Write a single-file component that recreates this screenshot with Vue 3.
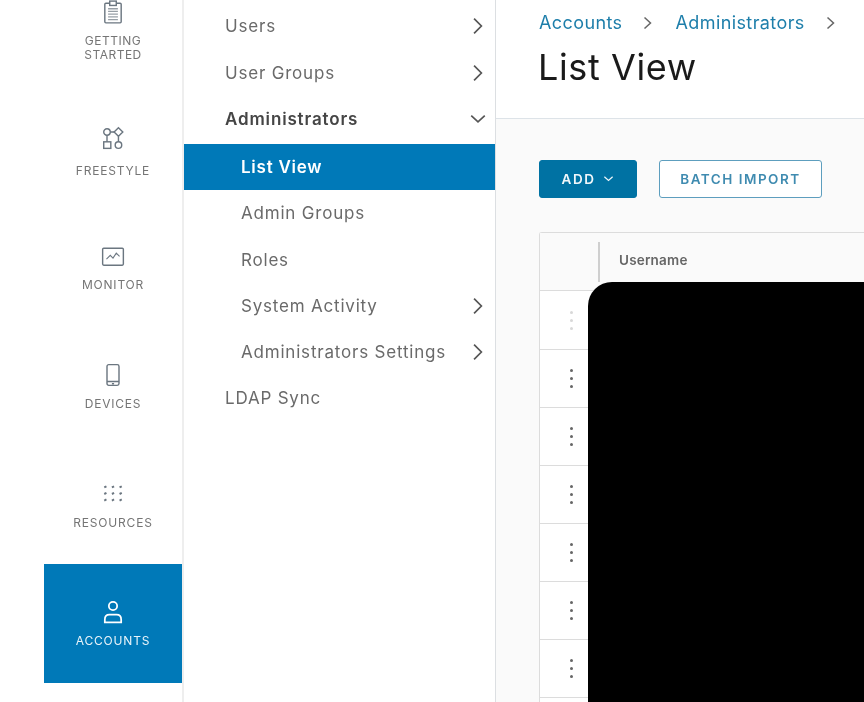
<script setup>
const rail = [
  { id: 'start', lines: ['GETTING', 'STARTED'] },
  { id: 'freestyle', lines: ['FREESTYLE'] },
  { id: 'monitor', lines: ['MONITOR'] },
  { id: 'devices', lines: ['DEVICES'] },
  { id: 'resources', lines: ['RESOURCES'] },
  { id: 'accounts', lines: ['ACCOUNTS'], active: true }
]
const topNav = [
  { label: 'Users', arrow: 'right' },
  { label: 'User Groups', arrow: 'right' },
  { label: 'Administrators', arrow: 'down', bold: true }
]
const subNav = [
  { label: 'List View', active: true },
  { label: 'Admin Groups' },
  { label: 'Roles' },
  { label: 'System Activity', arrow: 'right' },
  { label: 'Administrators Settings', arrow: 'right' }
]
const rows = [1, 2, 3, 4, 5, 6, 7, 8]
const dots = []
for (const y of [4, 10, 16]) for (const x of [3, 10, 17]) dots.push({ x, y })
</script>

<template>
  <div class="page">
    <aside class="rail">
      <div
        v-for="item in rail"
        :key="item.id"
        class="rail-item"
        :class="[item.id, { active: item.active }]"
      >
        <svg class="rail-icon" viewBox="0 0 22 22" fill="none" stroke="currentColor" stroke-width="1.300">
          <template v-if="item.id === 'start'">
            <rect x="3.500" y="3" width="15" height="18" rx="1" />
            <rect x="8" y="1" width="6" height="4" fill="#fff" />
            <path d="M6.500 8h9M6.500 10.500h9M6.500 13h9M6.500 15.500h9M6.500 18h9" stroke-width="1.200" opacity=".7" />
          </template>
          <template v-else-if="item.id === 'freestyle'">
            <circle cx="5.500" cy="5.500" r="3" />
            <path d="M16 1.500l4 4-4 4-4-4z" />
            <rect x="2.500" y="14.500" width="6.500" height="6" />
            <circle cx="16" cy="17.500" r="3" />
            <path d="M5.500 8.500v6M16 9.500v5M8.500 5.500H12" />
          </template>
          <template v-else-if="item.id === 'monitor'">
            <rect x="1.500" y="3" width="19" height="15.500" rx="1" />
            <path d="M5 13l3.500-3.500 2.500 2.500 3-4.500 3 3" stroke-width="1" />
          </template>
          <template v-else-if="item.id === 'devices'">
            <rect x="5.500" y="1.500" width="11" height="19" rx="1.600" />
            <path d="M5.500 17h11M10 19h2" />
          </template>
          <template v-else-if="item.id === 'resources'">
            <path
              v-for="d in dots"
              :key="d.x + '-' + d.y"
              :d="`M${d.x} ${d.y + 1}l2-1`"
              stroke-width="1.800"
            />
          </template>
          <template v-else>
            <circle cx="11" cy="5.500" r="3.800" stroke-width="1.600" />
            <path d="M3.500 20.500v-2.500c0-3 2-4.500 4.200-4.500h6.600c2.200 0 4.200 1.500 4.200 4.500v2.500z" stroke-width="1.600" />
          </template>
        </svg>
        <div class="rail-label">
          <div v-for="line in item.lines" :key="line">{{ line }}</div>
        </div>
      </div>
    </aside>

    <nav class="subnav">
      <div v-for="n in topNav" :key="n.label" class="nav-row top" :class="{ bold: n.bold }">
        <span>{{ n.label }}</span>
        <svg class="chev" viewBox="0 0 16 16" fill="none" stroke="currentColor" stroke-width="1.500">
          <path :d="n.arrow === 'down' ? 'M2 5l6 5.500 6-5.500' : 'M4.500 1.500l6.500 6.500-6.500 6.500'" />
        </svg>
      </div>
      <div class="children">
        <div
          v-for="n in subNav"
          :key="n.label"
          class="nav-row child"
          :class="{ selected: n.active }"
        >
          <span>{{ n.label }}</span>
          <svg v-if="n.arrow" class="chev" viewBox="0 0 16 16" fill="none" stroke="currentColor" stroke-width="1.500">
            <path d="M4.500 1.500l6.500 6.500-6.500 6.500" />
          </svg>
        </div>
      </div>
      <div class="nav-row"><span>LDAP Sync</span></div>
    </nav>

    <main class="main">
      <header class="head">
        <div class="crumbs">
          <a>Accounts</a>
          <svg class="crumb-sep" viewBox="0 0 12 14" fill="none" stroke="currentColor" stroke-width="1.500"><path d="M2.500 1.500l6 5.500-6 5.500" /></svg>
          <a>Administrators</a>
          <svg class="crumb-sep" viewBox="0 0 12 14" fill="none" stroke="currentColor" stroke-width="1.500"><path d="M2.500 1.500l6 5.500-6 5.500" /></svg>
        </div>
        <h1>List View</h1>
      </header>
      <section class="body">
        <div class="actions">
          <button class="btn primary">
            ADD
            <svg class="btn-chev" viewBox="0 0 12 8" fill="none" stroke="currentColor" stroke-width="1.300"><path d="M1.500 1.500l4.500 4 4.500-4" /></svg>
          </button>
          <button class="btn outline">BATCH IMPORT</button>
        </div>
        <div class="table">
          <div class="thead">
            <div class="cell-menu"></div>
            <div class="th">Username</div>
          </div>
          <div v-for="r in rows" :key="r" class="tr">
            <div class="cell-menu" :class="{ faint: r === 1 }">
              <i></i><i></i><i></i>
            </div>
          </div>
        </div>
      </section>
      <div class="redaction"></div>
    </main>
  </div>
</template>

<style>
html, body { margin: 0; background: #fff; overflow: hidden; }
</style>

<style scoped>
.page {
  width: 864px;
  height: 702px;
  overflow: hidden;
  display: flex;
  padding-left: 44px;
  box-sizing: border-box;
  background: #fff;
  font-family: Inter, "Noto Sans", sans-serif;
  filter: blur(0.45px);
}
.rail {
  width: 138px;
  flex: none;
  display: flex;
  flex-direction: column;
  color: #6b7680;
}
.rail-item {
  height: 118.500px;
  flex: none;
  display: flex;
  flex-direction: column;
  align-items: center;
  padding-top: 36px;
  box-sizing: border-box;
}
.rail-item.start {
  height: 126px;
  margin-top: -36px;
}
.rail-item.active {
  background: #0079b8;
  color: #fff;
}
.rail-icon { width: 24px; height: 24px; flex: none; }
.rail-label {
  margin-top: 10px;
  font-size: 12px;
  line-height: 14px;
  letter-spacing: 0.8px;
  text-align: center;
  color: #757575;
  white-space: nowrap;
}
.monitor .rail-label { margin-top: 9px; }
.freestyle .rail-label { margin-top: 14px; }
.start .rail-label { letter-spacing: 0.5px; }
.active .rail-label { color: #e8f4fa; }
.subnav {
  width: 314px;
  flex: none;
  box-sizing: border-box;
  border-left: 2px solid #eeeeee;
  border-right: 1px solid #dcdfe2;
  padding-top: 3px;
}
.nav-row {
  height: 46.250px;
  display: flex;
  align-items: center;
  justify-content: space-between;
  padding: 0 8px 0 41px;
  font-size: 17px;
  letter-spacing: 0.8px;
  color: #6a6a6a;
}
.nav-row.top { height: 46.500px; }
.nav-row.bold { font-weight: 600; color: #454545; letter-spacing: 0.85px; }
.children { margin-top: 1.500px; }
.child { padding-left: 57px; }
.child.selected {
  background: #0079b8;
  color: #fff;
  font-weight: 600;
  letter-spacing: 0.75px;
}
.chev { width: 18px; height: 18px; color: #555; flex: none; }
.main {
  position: relative;
  flex: 1;
  min-width: 0;
  display: flex;
  flex-direction: column;
}
.head {
  height: 119px;
  flex: none;
  box-sizing: border-box;
  padding: 9px 0 0 43px;
  border-bottom: 1px solid #dde3e8;
}
.crumbs {
  display: flex;
  align-items: center;
  height: 26px;
  font-size: 18px;
  letter-spacing: 0.4px;
  color: #1d7eaa;
  white-space: nowrap;
}
.crumb-sep { width: 12px; height: 14px; margin: 2px 21px 0 20px; color: #666; flex: none; }
h1 {
  margin: 6px 0 0 -1px;
  font-size: 36px;
  line-height: 52px;
  font-weight: 400;
  letter-spacing: 0.6px;
  color: #1a1a1a;
}
.body {
  flex: 1;
  background: #fafafa;
  padding: 41px 0 0 43px;
  min-width: 0;
}
.actions { display: flex; gap: 22px; }
.btn {
  height: 38px;
  box-sizing: border-box;
  border-radius: 3px;
  font-family: inherit;
  font-size: 13.500px;
  font-weight: 600;
  letter-spacing: 1.500px;
  display: flex;
  align-items: center;
  justify-content: center;
}
.primary {
  width: 98px;
  background: #0072a3;
  border: 1px solid #0072a3;
  color: #f0f7fa;
  gap: 8px;
}
.btn-chev { width: 11px; height: 8px; }
.outline {
  width: 163px;
  background: #fff;
  border: 1.500px solid #5d9ebe;
  color: #3f8bb0;
}
.table {
  margin-top: 34px;
  width: 340px;
  background: #fff;
  border: 1px solid #dcdcdc;
  border-right: none;
  border-radius: 3px 0 0 0;
}
.thead {
  height: 57px;
  display: flex;
  align-items: center;
  background: #fafafa;
}
.thead .cell-menu { height: 40px; width: 60px; border-right: 2px solid #cfcfcf; box-sizing: border-box; }
.th {
  padding: 0 0 3px 19px;
  font-size: 13.500px;
  font-weight: 600;
  letter-spacing: 0.2px;
  color: #666;
}
.tr {
  height: 58px;
  display: flex;
  align-items: center;
  border-top: 1px solid #dcdcdc;
  box-sizing: border-box;
}
.thead + .tr { height: 59px; }
.tr .cell-menu {
  width: 63px;
  display: flex;
  flex-direction: column;
  align-items: center;
  gap: 5px;
}
.tr .cell-menu i {
  width: 3px;
  height: 3px;
  border-radius: 50%;
  background: #666;
}
.tr .cell-menu.faint i { background: #d8d8d8; }
.redaction {
  position: absolute;
  left: 92px;
  top: 282px;
  right: 0;
  bottom: 0;
  background: #000;
  border-top-left-radius: 24px;
}
</style>
